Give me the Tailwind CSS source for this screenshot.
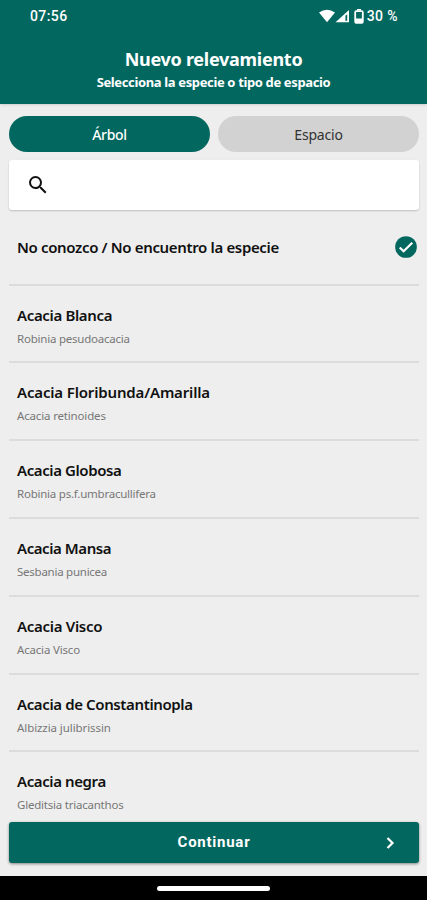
<!DOCTYPE html>
<html lang="es">
<head>
<meta charset="utf-8">
<title>Nuevo relevamiento</title>
<script src="https://cdn.jsdelivr.net/npm/@tailwindcss/browser@4"></script>
</head>
<body class="bg-black">
<div class="flex h-[900px] w-[427px] flex-col overflow-hidden bg-[#eeeeee] font-['Noto_Sans','Open_Sans',sans-serif] text-[#111111]">
  <header class="h-[104px] shrink-0 bg-[#02675f] text-white shadow-sm">
    <div class="flex h-8 items-center justify-between pl-[30px] pr-[29px] font-[Roboto,sans-serif] text-[14px] font-medium">
      <span class="tracking-[0.4px]">07:56</span>
      <div class="flex items-center">
        <svg class="h-[14px] w-4" viewBox="0 0 16 14" fill="currentColor"><path d="M0 3.5Q8-1.8 16 3.5L8 13.2Z"/></svg>
        <svg class="h-[14px] w-[15px]" viewBox="0 0 15 14"><path d="M.5 13.2L14 1v12.2Z" fill="currentColor"/><path d="M10.4 6.8l1.8-1.6v6.5h-1.8Z" fill="#02675f"/></svg>
        <svg class="ml-[4px] h-[15px] w-[10px]" viewBox="0 0 10 15"><path d="M3 0h4v1.5H3Z" fill="currentColor"/><rect x="1.2" y="2.2" width="7.6" height="11.6" rx="1" fill="none" stroke="currentColor" stroke-width="1.8"/><path d="M1 9.5h8V14H1Z" fill="currentColor"/></svg>
        <span class="ml-[3px] tracking-[0.4px]">30 %</span>
      </div>
    </div>
    <h1 class="mt-[14px] text-center text-[18px] leading-[26px] font-bold tracking-[-0.27px]">Nuevo relevamiento</h1>
    <p class="text-center text-[13px] leading-5 font-bold tracking-[-0.36px]">Selecciona la especie o tipo de espacio</p>
  </header>

  <main class="min-h-0 flex-1 overflow-hidden pt-3 pr-2 pl-[9px]">
    <div class="flex h-9 gap-2 text-[14px]">
      <button class="flex-1 rounded-full bg-[#02675f] font-medium tracking-[-0.3px] text-white">Árbol</button>
      <button class="flex-1 rounded-full bg-[#d2d2d2] tracking-[-0.2px] text-[#333333]">Espacio</button>
    </div>
    <div class="mt-2 flex h-[50px] items-center rounded-[3px] bg-white pl-[17px] shadow-[0_1px_2px_rgba(0,0,0,0.2)]">
      <svg class="h-6 w-6" viewBox="0 0 24 24" fill="#111111"><path d="M15.5 14h-.79l-.28-.27A6.47 6.47 0 0 0 16 9.5 6.5 6.5 0 1 0 9.5 16c1.61 0 3.09-.59 4.23-1.57l.27.28v.79l5 4.99L20.49 19l-4.99-5zm-6 0C7.01 14 5 11.99 5 9.5S7.01 5 9.5 5 14 7.01 14 9.5 11.99 14 9.5 14z"/></svg>
    </div>
    <ul class="text-[15px] leading-6 font-semibold">
      <li class="flex h-[75.6px] items-center justify-between border-b-2 border-[#dcdcdc] pl-2">
        <span class="tracking-[-0.35px]">No conozco / No encuentro la especie</span>
        <svg class="h-[26px] w-[26px]" viewBox="0 0 24 24"><circle cx="12" cy="12" r="10" fill="#02675f"/><path d="M6.2 12.4l3.6 3.6 8-8" fill="none" stroke="white" stroke-width="2"/></svg>
      </li>
      <li class="h-[77.8px] border-b-2 border-[#dcdcdc] pt-[17px] pl-2"><p class="tracking-[-0.35px]">Acacia Blanca</p><p class="text-[11.5px] font-normal tracking-[-0.22px] text-[#777777]">Robinia pesudoacacia</p></li>
      <li class="h-[77.8px] border-b-2 border-[#dcdcdc] pt-[17px] pl-2"><p class="tracking-[-0.16px]">Acacia Floribunda/Amarilla</p><p class="text-[11.5px] font-normal tracking-[-0.16px] text-[#777777]">Acacia retinoides</p></li>
      <li class="h-[77.8px] border-b-2 border-[#dcdcdc] pt-[17px] pl-2"><p class="tracking-[-0.4px]">Acacia Globosa</p><p class="text-[11.5px] font-normal tracking-[-0.23px] text-[#777777]">Robinia ps.f.umbracullifera</p></li>
      <li class="h-[77.8px] border-b-2 border-[#dcdcdc] pt-[17px] pl-2"><p class="tracking-[-0.43px]">Acacia Mansa</p><p class="text-[11.5px] font-normal tracking-[-0.25px] text-[#777777]">Sesbania punicea</p></li>
      <li class="h-[77.8px] border-b-2 border-[#dcdcdc] pt-[17px] pl-2"><p class="tracking-[-0.3px]">Acacia Visco</p><p class="text-[11.5px] font-normal tracking-[-0.18px] text-[#777777]">Acacia Visco</p></li>
      <li class="h-[77.8px] border-b-2 border-[#dcdcdc] pt-[17px] pl-2"><p class="tracking-[-0.38px]">Acacia de Constantinopla</p><p class="text-[11.5px] font-normal tracking-[-0.08px] text-[#777777]">Albizzia julibrissin</p></li>
      <li class="h-[77.8px] pt-[17px] pl-2"><p class="tracking-[-0.4px]">Acacia negra</p><p class="text-[11.5px] font-normal tracking-[-0.22px] text-[#777777]">Gleditsia triacanthos</p></li>
    </ul>
  </main>

  <div class="h-[54px] shrink-0 pr-2 pl-[9px]">
    <button class="grid h-[41px] w-full grid-cols-[1fr_auto_1fr] items-center rounded-[3px] bg-[#02675f] font-[Roboto,sans-serif] text-[15px] font-bold tracking-[0.75px] text-white shadow-[0_1px_3px_rgba(0,0,0,0.45)]">
      <span class="col-start-2">Continuar</span>
      <svg class="mr-[24px] h-3 w-[9px] justify-self-end" viewBox="0 0 9 12" fill="none" stroke="currentColor" stroke-width="2.2"><path d="M1.5 1l5 5-5 5"/></svg>
    </button>
  </div>
  <footer class="flex h-6 shrink-0 items-center justify-center bg-black"><span class="h-[5px] w-[113px] rounded-full bg-white"></span></footer>
</div>
</body>
</html>
